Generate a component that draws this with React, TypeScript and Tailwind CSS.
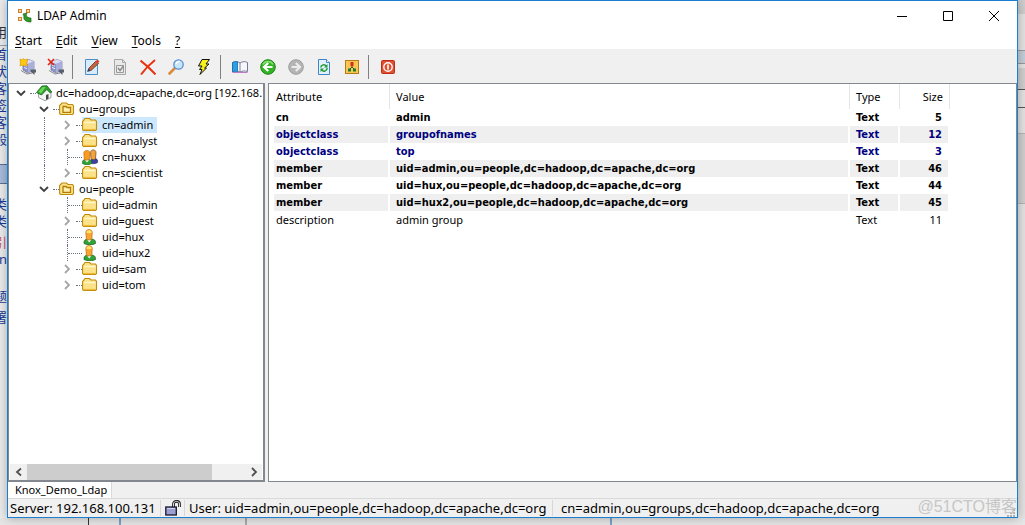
import React from 'react';
import clsx from 'clsx';

type IconProps = { className?: string };

type TreeItem = {
  label: string;
  level: number;
  icon: (props: IconProps) => React.ReactElement;
  state: 'open' | 'closed' | 'leaf';
  guide?: boolean;
  selected?: boolean;
};

type Entry = {
  attribute: string;
  value: string;
  size: number;
  must?: boolean;
  schema?: boolean;
};

function AppIcon() {
  return (
    <svg viewBox="0 0 14 14" className="h-3.5 w-3.5" aria-hidden="true">
      <g fill="#fbd9a4" stroke="#c9822b">
        <rect x=".5" y=".5" width="3" height="3" />
        <rect x="8.500" y=".5" width="3" height="3" />
        <rect x=".5" y="8.500" width="3" height="3" />
      </g>
      <path d="M5 5l4-1-1 2c1 2 2 3 5 3v4c-5 0-8-2-7-6z" fill="#2f9a28" stroke="#17651a" strokeWidth=".7" />
    </svg>
  );
}

function ServerBase() {
  return (
    <>
      <path d="M4 4l6-2.500 5 2V12l-6 3-5-3z" fill="#8e93c9" stroke="#686d9e" strokeWidth=".7" />
      <path d="M4 4l6-2.500 5 2L9 6z" fill="#d9dcf2" />
      <path d="M9 6l6-2.500V12l-6 3z" fill="#a9aedb" />
      <path d="M5 7l3 1.200M5 9.500l3 1.200" stroke="#e8eaf8" />
      <path d="M2 12.500l6 3.500 5-1" fill="none" stroke="#8a8a8a" />
      <path d="M11.500 11.500H17v3h-1.500v2.500l-4-3.500z" fill="#59606a" />
    </>
  );
}

function ConnectIcon() {
  return (
    <svg viewBox="0 0 18 18" className="h-[18px] w-[18px]" aria-hidden="true">
      <ServerBase />
      <path d="M1 1l2 1 1.500-1.500L6 2l2.500-1V3.500L7.500 5l1 3-3-1-1.500 1L3 7 1 8l.500-3z" fill="#ffc814" stroke="#d79a00" strokeWidth=".7" />
    </svg>
  );
}

function DisconnectIcon() {
  return (
    <svg viewBox="0 0 18 18" className="h-[18px] w-[18px]" aria-hidden="true">
      <ServerBase />
      <path d="M1 1l6 6M7 1L1 7" stroke="#e3220b" strokeWidth="1.600" />
    </svg>
  );
}

function EditIcon() {
  return (
    <svg viewBox="0 0 16 16" className="h-4 w-4" aria-hidden="true">
      <path d="M1.500.5h12v15h-12z" fill="#d8ebfb" stroke="#4a90c8" />
      <path d="M4 12l1-3 7-7 2.500 2.500L7 11.500z" fill="#c0683c" stroke="#6a3426" strokeWidth=".8" />
      <path d="M11.500 2.500L13.500.5l2 2-2 2z" fill="#d83a2c" />
      <path d="M3 13l1.500-3.500 2 2z" fill="#2c3e66" />
    </svg>
  );
}

function CheckIcon() {
  return (
    <svg viewBox="0 0 16 16" className="h-4 w-4" fill="none" aria-hidden="true">
      <path d="M2.500.5h8l3 3v12h-11z" fill="#e9e9e9" stroke="#a8a8a8" />
      <path d="M10.500.5v3h3" stroke="#a8a8a8" />
      <path d="M4.500 6.500h7v7h-7z" stroke="#9a9a9a" />
      <path d="M6 9l2 2.500L11.500 7" stroke="#8b8b8b" strokeWidth="1.500" />
    </svg>
  );
}

function DeleteIcon() {
  return (
    <svg viewBox="0 0 16 16" className="h-4 w-4" fill="none" aria-hidden="true">
      <path d="M.5 1.500C5 5 10 9 15.500 15.500" stroke="#e8320e" strokeWidth="2" />
      <path d="M15 1C10 5 5 10 1 15.500" stroke="#e8320e" strokeWidth="2" />
    </svg>
  );
}

function SearchIcon() {
  return (
    <svg viewBox="0 0 16 16" className="h-4 w-4" aria-hidden="true">
      <path d="M1.500 14.500L7 9" stroke="#d98a3a" strokeWidth="2.600" strokeLinecap="round" />
      <circle cx="10.500" cy="5.500" r="4.700" fill="#c8e6fa" stroke="#5a8fd0" strokeWidth="1.300" />
      <path d="M8 5c.5-2 2-2.500 3.500-2.500" stroke="#fff" strokeWidth="1.300" fill="none" />
    </svg>
  );
}

function BoltIcon() {
  return (
    <svg viewBox="0 0 16 16" className="h-4 w-4" aria-hidden="true">
      <path d="M6 .5h7.500L10 5h3L8.500 9h2L4 15.500 6 10.500H3.500L6 7H2.500z" fill="#f7f01c" stroke="#111" />
    </svg>
  );
}

function BookIcon() {
  return (
    <svg viewBox="0 0 16 16" className="h-4 w-4" aria-hidden="true">
      <path d="M.5 3.500c3-1.500 5-1 7.500.5 2.500-1.500 4.500-2 7.500-.5v9c-3-1-5-.5-7.500.5-2.500-1-4.500-1.500-7.500-.5z" fill="#f7f7fb" stroke="#77779a" />
      <path d="M.5 3.500c1.500-.7 3-1 5-.7v9.700c-2-.5-3.500-.3-5 .3z" fill="#2ba0e4" stroke="#136bae" strokeWidth=".8" />
      <path d="M8 4v9" stroke="#8484a5" />
      <path d="M.5 13.500h15" stroke="#bc7ac0" />
    </svg>
  );
}

function BackIcon() {
  return (
    <svg viewBox="0 0 16 16" className="h-4 w-4" aria-hidden="true">
      <circle cx="8" cy="8" r="7.300" fill="#32b324" stroke="#20821a" />
      <path d="M3 5.500a5.500 5 0 0 1 10 0" fill="none" stroke="#85dc6f" strokeWidth="1.500" />
      <path d="M12.500 8H5M8.200 4L4 8l4.200 4" fill="none" stroke="#fff" strokeWidth="2.200" />
    </svg>
  );
}

function ForwardIcon() {
  return (
    <svg viewBox="0 0 16 16" className="h-4 w-4" aria-hidden="true">
      <circle cx="8" cy="8" r="7.300" fill="#b4b4b4" stroke="#9d9d9d" />
      <path d="M3.500 8H11M7.800 4L12 8l-4.200 4" fill="none" stroke="#ececec" strokeWidth="2.200" />
    </svg>
  );
}

function RefreshIcon() {
  return (
    <svg viewBox="0 0 16 16" className="h-4 w-4" aria-hidden="true">
      <path d="M2.500.5h8l3 3v12h-11z" fill="#e3f1fd" stroke="#3f86c9" />
      <path d="M10.500.5v3h3" fill="#fff" stroke="#3f86c9" />
      <path d="M4.800 8.500C5 5.500 9 5 10 7M11.200 9c-.2 3.500-4.200 4-5.200 2" fill="none" stroke="#1f9a30" strokeWidth="1.500" />
      <path d="M11.500 5v3.500H8zM4.500 13V9.500H8z" fill="#1f9a30" />
    </svg>
  );
}

function SchemaIcon() {
  return (
    <svg viewBox="0 0 16 16" className="h-4 w-4" aria-hidden="true">
      <rect x="1.500" y="1.500" width="13" height="13" fill="#fcc653" stroke="#b87a17" />
      <path d="M8 5v3M5 11l3-3 3 3" fill="none" stroke="#444" />
      <rect x="6.500" y="3" width="3" height="4" fill="#d92a1c" />
      <rect x="4" y="9.500" width="3" height="3" fill="#1b7c2c" />
      <rect x="9" y="9.500" width="3" height="3" fill="#1b7c2c" />
    </svg>
  );
}

function ExitIcon() {
  return (
    <svg viewBox="0 0 16 16" className="h-4 w-4" fill="none" aria-hidden="true">
      <rect x="1.500" y="1.500" width="13" height="13" rx="1" fill="#e2502f" stroke="#bb2f18" />
      <circle cx="8" cy="8" r="4.200" stroke="#fff" strokeWidth="1.400" />
      <path d="M8 5.500v5" stroke="#fff" strokeWidth="1.600" />
    </svg>
  );
}

function HomeIcon({ className }: IconProps) {
  return (
    <svg viewBox="0 0 16 16" className={className} aria-hidden="true">
      <path d="M2.500 8v4.500L9 15.800l6-3.300V7l-4-4z" fill="#f4f4f4" stroke="#7c7c7c" strokeWidth=".7" />
      <path d="M.5 7.500L6 1l5-.2 4.800 6.200-1.500 1-3.500-3.500L5.500 10z" fill="#2fa42c" stroke="#14621a" strokeWidth=".8" />
      <path d="M2.500 6.800L6.500 2h3.200L5 8.500z" fill="#6ed45c" />
      <path d="M10 10l2.500-1v4.500L10 15z" fill="#3d4a3d" />
    </svg>
  );
}

function FolderIcon({ className }: IconProps) {
  return (
    <svg viewBox="0 0 16 16" className={className} aria-hidden="true">
      <path d="M.6 12.500V4.500L2 3l1-1.500h4.500L9 3h4.500l1 1.500v8l-1 1H1.600z" fill="#fae38a" stroke="#c08a0c" strokeWidth="1.100" />
      <path d="M2 5.500h11.500" stroke="#fff7cf" strokeWidth="1.300" />
      <path d="M1.500 12.500h12.500" stroke="#eebc3a" strokeWidth="1.200" />
    </svg>
  );
}

function UnitIcon({ className }: IconProps) {
  return (
    <svg viewBox="0 0 16 16" className={className} aria-hidden="true">
      <path d="M.6 12.500V4.500L3 2h4.500L9 3.500h4.500l1 1.500v7.500l-1 1H1.600z" fill="#fae38a" stroke="#c08a0c" strokeWidth="1.100" />
      <path d="M4 5.500h3l1 1h3.500v4.800H4z" fill="#ffefae" stroke="#b37b07" strokeWidth="1.300" />
    </svg>
  );
}

function UserIcon({ className }: IconProps) {
  return (
    <svg viewBox="0 0 16 16" className={className} aria-hidden="true">
      <path d="M2 14.500c-.5-3 1.500-4.500 4-4.500h3c3 0 5 1.500 4.500 4.500-3 1.700-8.500 1.700-11.500 0z" fill="#2fa336" stroke="#17581c" strokeWidth=".7" />
      <path d="M5 10.500l2.200 3 2.300-3z" fill="#fff" />
      <path d="M3.800 3.500c0-4 6.500-4 6.500 0L9.800 9.500c-.5 2-5 2-5.500 0z" fill="#f7a432" stroke="#b97113" strokeWidth=".7" />
      <path d="M4.200 3.500C4.800 0 9.300 0 9.900 3.500 8.500 4.600 5.500 4.600 4.200 3.500z" fill="#ffe26b" />
    </svg>
  );
}

function UsersIcon({ className }: IconProps) {
  return (
    <svg viewBox="0 0 16 16" className={className} aria-hidden="true">
      <path d="M8.500 14c-.5-3 1-4.500 2.500-4.500h2c2 0 3.300 2 2.500 4-2 1.500-5 1.500-7 .5z" fill="#3d3fa6" stroke="#22235c" strokeWidth=".6" />
      <path d="M8.500 3.500c0-3.500 5.500-3.500 5.500 0l-.5 6c-.5 1.500-4 1.500-4.500 0z" fill="#f4a23c" stroke="#6b4316" strokeWidth=".7" />
      <path d="M.5 14.500c-.5-3 1-4 3-4h3c2.500 0 3.800 1.500 3 4-2.500 1.700-6.500 1.700-9 0z" fill="#2fa336" stroke="#17581c" strokeWidth=".6" />
      <path d="M3 11l2 2.500L7 11z" fill="#fff" />
      <path d="M1.800 4c0-3.500 6-3.500 6 0l-.5 6c-.5 1.500-4.500 1.500-5 0z" fill="#f99a1f" stroke="#b97113" strokeWidth=".7" />
    </svg>
  );
}

function LockIcon() {
  return (
    <svg viewBox="0 0 16 16" className="h-4 w-4" aria-hidden="true">
      <path d="M8.500 7V4c0-3.500 6-3.500 6 0v3" fill="none" stroke="#222" strokeWidth="2.800" />
      <path d="M8.500 7V4c0-3.500 6-3.500 6 0v3" fill="none" stroke="#ddd" strokeWidth="1" />
      <rect x=".8" y="7" width="10.500" height="8" fill="#9b9ed0" stroke="#16162c" strokeWidth="1.300" />
      <path d="M2 8.500h8" stroke="#d4d5ef" />
    </svg>
  );
}

function Chevron({ direction, className }: { direction: 'left' | 'right' | 'down'; className?: string }) {
  const paths = { left: 'M7 1.500L3 5l4 3.500', right: 'M3 1L7 5 3 9', down: 'M1 3l4 4 4-4' };
  return (
    <svg viewBox="0 0 10 10" className={clsx('h-2.5 w-2.5', className)} fill="none" stroke="currentColor" strokeWidth="1.800" aria-hidden="true">
      <path d={paths[direction]} />
    </svg>
  );
}

const menu = ['Start', 'Edit', 'View', 'Tools', '?'];

const toolbar = [
  [
    { name: 'Connect', icon: ConnectIcon },
    { name: 'Disconnect', icon: DisconnectIcon },
  ],
  [
    { name: 'Edit entry', icon: EditIcon },
    { name: 'Properties', icon: CheckIcon },
    { name: 'Delete', icon: DeleteIcon },
    { name: 'Search', icon: SearchIcon },
    { name: 'Modify', icon: BoltIcon },
  ],
  [
    { name: 'Bookmarks', icon: BookIcon },
    { name: 'Back', icon: BackIcon },
    { name: 'Forward', icon: ForwardIcon },
    { name: 'Refresh', icon: RefreshIcon },
    { name: 'Schema', icon: SchemaIcon },
  ],
  [{ name: 'Exit', icon: ExitIcon }],
];

const tree: TreeItem[] = [
  { label: 'dc=hadoop,dc=apache,dc=org [192.168.1', level: 0, icon: HomeIcon, state: 'open' },
  { label: 'ou=groups', level: 1, icon: UnitIcon, state: 'open' },
  { label: 'cn=admin', level: 2, icon: FolderIcon, state: 'closed', guide: true, selected: true },
  { label: 'cn=analyst', level: 2, icon: FolderIcon, state: 'closed', guide: true },
  { label: 'cn=huxx', level: 2, icon: UsersIcon, state: 'leaf', guide: true },
  { label: 'cn=scientist', level: 2, icon: FolderIcon, state: 'closed', guide: true },
  { label: 'ou=people', level: 1, icon: UnitIcon, state: 'open' },
  { label: 'uid=admin', level: 2, icon: FolderIcon, state: 'leaf' },
  { label: 'uid=guest', level: 2, icon: FolderIcon, state: 'closed' },
  { label: 'uid=hux', level: 2, icon: UserIcon, state: 'leaf' },
  { label: 'uid=hux2', level: 2, icon: UserIcon, state: 'leaf' },
  { label: 'uid=sam', level: 2, icon: FolderIcon, state: 'closed' },
  { label: 'uid=tom', level: 2, icon: FolderIcon, state: 'closed' },
];

const entries: Entry[] = [
  { attribute: 'cn', value: 'admin', size: 5, must: true },
  { attribute: 'objectclass', value: 'groupofnames', size: 12, must: true, schema: true },
  { attribute: 'objectclass', value: 'top', size: 3, must: true, schema: true },
  { attribute: 'member', value: 'uid=admin,ou=people,dc=hadoop,dc=apache,dc=org', size: 46, must: true },
  { attribute: 'member', value: 'uid=hux,ou=people,dc=hadoop,dc=apache,dc=org', size: 44, must: true },
  { attribute: 'member', value: 'uid=hux2,ou=people,dc=hadoop,dc=apache,dc=org', size: 45, must: true },
  { attribute: 'description', value: 'admin group', size: 11 },
];

function TreeRow({ item }: { item: TreeItem }) {
  const Icon = item.icon;
  return (
    <li role="treeitem" aria-selected={!!item.selected} className="flex h-4">
      {item.level > 0 && <span className="w-[23px] shrink-0" />}
      {item.level > 1 && (
        <span className="flex w-[23px] shrink-0 justify-center">
          {item.guide && <span className="border-l border-dotted border-gray-500" />}
        </span>
      )}
      {item.state === 'leaf' ? (
        <span className="ml-[11px] flex w-[15px] shrink-0 items-center border-l border-dotted border-gray-500">
          <span className="w-full border-t border-dotted border-gray-500" />
        </span>
      ) : (
        <span className="flex w-[26px] shrink-0 items-center">
          <button type="button" aria-label={`Toggle ${item.label}`} className="flex w-[22px] shrink-0 justify-center">
            <Chevron
              direction={item.state === 'open' ? 'down' : 'right'}
              className={item.state === 'open' ? 'text-[#404040]' : 'text-[#a6a6a6]'}
            />
          </button>
          <span className="-ml-0.5 w-1.5 shrink-0 border-t border-dotted border-gray-500" />
        </span>
      )}
      <button type="button" className={clsx('flex items-center whitespace-nowrap pr-1', item.selected && 'bg-[#cce8ff]')}>
        <Icon className="mr-1 h-4 w-4 shrink-0" />
        {item.label}
      </button>
    </li>
  );
}

function TreePane() {
  return (
    <nav className="flex w-[257px] shrink-0 flex-col overflow-hidden border-2 border-t border-l border-[#828790] bg-white">
      <ul role="tree" className="flex-1 overflow-hidden pt-px pl-px text-[11px] leading-4">
        {tree.map((item) => (
          <TreeRow key={item.label} item={item} />
        ))}
      </ul>
      <div className="mx-px flex h-4 bg-[#f0f0f0] text-[#505050]">
        <button type="button" aria-label="Scroll left" className="flex w-[17px] items-center justify-center">
          <Chevron direction="left" />
        </button>
        <div className="flex-1">
          <div className="h-full w-[85%] bg-[#cdcdcd]" />
        </div>
        <button type="button" aria-label="Scroll right" className="flex w-[17px] items-center justify-center">
          <Chevron direction="right" />
        </button>
      </div>
    </nav>
  );
}

function EntryTable() {
  return (
    <section className="min-w-0 flex-1 border border-[#828790] bg-white pr-[66px] pl-[5px]">
      <table className="w-full table-fixed border-separate border-spacing-0 text-left text-[11px] leading-4">
        <colgroup>
          <col className="w-[116px]" />
          <col />
          <col className="w-[50px]" />
          <col className="w-[50px]" />
        </colgroup>
        <thead>
          <tr className="h-[25px]">
            <th className="border-r border-[#e5e5e5] px-0.5 font-normal">Attribute</th>
            <th className="border-r border-[#e5e5e5] px-1.5 font-normal">Value</th>
            <th className="border-r border-[#e5e5e5] px-1.5 font-normal">Type</th>
            <th className="border-r border-[#e5e5e5] px-1.5 text-right font-normal">Size</th>
          </tr>
        </thead>
        <tbody>
          {entries.map((entry, index) => (
            <tr
              key={index}
              className={clsx(
                'h-[17px]',
                entry.must && "font-['DejaVu_Sans_Condensed','DejaVu_Sans',sans-serif] font-bold",
                entry.schema && 'text-[#000080]',
                index % 2 === 1 && 'bg-[#efefef]',
              )}
            >
              <td className="border-r-2 border-white px-0.5">{entry.attribute}</td>
              <td className="border-r-2 border-white px-1.5">{entry.value}</td>
              <td className="border-r-2 border-white px-1.5">Text</td>
              <td className="border-r-2 border-white px-1.5 text-right">{entry.size}</td>
            </tr>
          ))}
        </tbody>
      </table>
    </section>
  );
}

function StatusBar() {
  return (
    <footer className="relative flex h-[18px] items-center text-[13px] leading-4 whitespace-nowrap">
      <span className="w-[153px] border-r border-[#d7d7d7] pl-0.5">Server: 192.168.100.131</span>
      <span className="flex w-6 justify-center border-r border-[#d7d7d7]">
        <LockIcon />
      </span>
      <span className="w-[368px] border-r border-[#d7d7d7] pl-1">User: uid=admin,ou=people,dc=hadoop,dc=apache,dc=org</span>
      <span className="flex-1 pl-2">cn=admin,ou=groups,dc=hadoop,dc=apache,dc=org</span>
      <svg viewBox="0 0 8 8" className="mr-0.5 h-2 w-2 self-end text-[#b0b0b0]" fill="currentColor" aria-hidden="true">
        <path d="M6 0h2v2H6zM3 3h2v2H3zM6 3h2v2H6zM0 6h2v2H0zM3 6h2v2H3zM6 6h2v2H6z" />
      </svg>
      <span className="absolute right-0 bottom-0 font-['Liberation_Sans','Noto_Sans_CJK_SC',sans-serif] text-base leading-5 text-[#c6c6c6]">
        @51CTO博客
      </span>
    </footer>
  );
}

function PageBehindLeft() {
  return (
    <div className="flex w-[7px] shrink-0 flex-col items-end overflow-hidden bg-[#ececec] pt-6 text-[13px] leading-[17px] text-[#1c3a94]">
      <span className="text-[#333]">用</span>
      <span className="mt-1 border-t border-gray-400">首</span>
      <span>状</span>
      <span>客</span>
      <span>签</span>
      <span>客</span>
      <span>般</span>
      <span className="mt-4 h-5 w-full shrink-0 border-y border-[#5f6f92] bg-[#a9bcdd]" />
      <span className="mt-3">类</span>
      <span>类</span>
      <span className="mt-1 text-[#d0506a]">引</span>
      <span>n</span>
      <span className="mt-5">题</span>
      <span className="mt-1">署</span>
    </div>
  );
}

function PageBehindRight() {
  return (
    <div className="flex w-[7px] shrink-0 flex-col bg-[#e4e4e4]">
      <span className="h-3.5 bg-[#cfcfcf]" />
      <span className="mt-9 h-3.5 border-y border-[#9a9a9a] bg-[#c3cfda]" />
      <span className="mt-1 h-[22px] border-b border-[#555] bg-[#d0d0d0]" />
      <span className="h-[18px] border-b border-[#555]" />
      <span className="h-[26px] border-b border-[#b5b5b5]" />
      <span className="h-[70px] border-b border-[#b5b5b5] bg-[#d0d0d0]" />
    </div>
  );
}

export default function App() {
  return (
    <div className="flex h-screen w-full flex-col overflow-hidden bg-[#e6e6e6] font-['Noto_Sans','Noto_Sans_CJK_SC',sans-serif] text-black">
      <div className="flex min-h-0 flex-1">
        <PageBehindLeft />
        <main className="z-10 flex min-w-0 flex-1 flex-col border border-[#1a7fd0] bg-[#f0f0f0] shadow-[0_0_10px_rgba(0,0,0,0.3)]">
          <header className="flex h-[29px] items-center bg-white pl-2.5 text-[12px]">
            <AppIcon />
            <h1 className="ml-[5px] flex-1">LDAP Admin</h1>
            <button type="button" aria-label="Minimize" className="flex h-full w-[46px] items-center justify-center">
              <svg viewBox="0 0 10 10" className="h-2.5 w-2.5" stroke="#000"><path d="M0 5.500h10" /></svg>
            </button>
            <button type="button" aria-label="Maximize" className="flex h-full w-[46px] items-center justify-center">
              <svg viewBox="0 0 10 10" className="h-2.5 w-2.5" fill="none" stroke="#000"><path d="M.5.5h9v9h-9z" /></svg>
            </button>
            <button type="button" aria-label="Close" className="flex h-full w-[46px] items-center justify-center">
              <svg viewBox="0 0 10 10" className="h-2.5 w-2.5" stroke="#000"><path d="M0 0l10 10M10 0L0 10" /></svg>
            </button>
          </header>
          <nav className="flex h-[19px] items-end gap-3.5 bg-white pl-[7px] text-[12px] leading-[17px]">
            {menu.map((name) => (
              <button key={name} type="button">
                <span className="underline underline-offset-2">{name[0]}</span>
                {name.slice(1)}
              </button>
            ))}
          </nav>
          <div role="toolbar" className="flex h-[34px] items-center pt-0.5 pl-1.5">
            {toolbar.map((group, index) => (
              <React.Fragment key={index}>
                {index > 0 && <span className="mr-[5px] ml-0.5 h-6 w-px bg-[#808080]" />}
                {group.map(({ name, icon: Icon }) => (
                  <button key={name} type="button" aria-label={name} className="flex h-7 w-7 items-center justify-center">
                    <Icon />
                  </button>
                ))}
              </React.Fragment>
            ))}
          </div>
          <div className="flex min-h-0 flex-1 gap-[3px]">
            <TreePane />
            <EntryTable />
          </div>
          <div role="tablist" className="flex h-[17px] border-b border-[#d9d9d9] text-[11px] leading-4">
            <button type="button" role="tab" aria-selected="true" className="border-r border-[#d9d9d9] bg-white pr-1 pl-[7px]">
              Knox_Demo_Ldap
            </button>
          </div>
          <StatusBar />
        </main>
        <PageBehindRight />
      </div>
      <div className="flex h-[7px] shrink-0">
        <span className="w-[89px] border-r border-[#333]" />
        <span className="w-8 border-r-2 border-[#7da0c4]" />
        <span className="w-[126px] border-r-2 border-[#a9a9a9]" />
        <span className="w-[365px] border-r-2 border-[#7da0c4]" />
      </div>
    </div>
  );
}
